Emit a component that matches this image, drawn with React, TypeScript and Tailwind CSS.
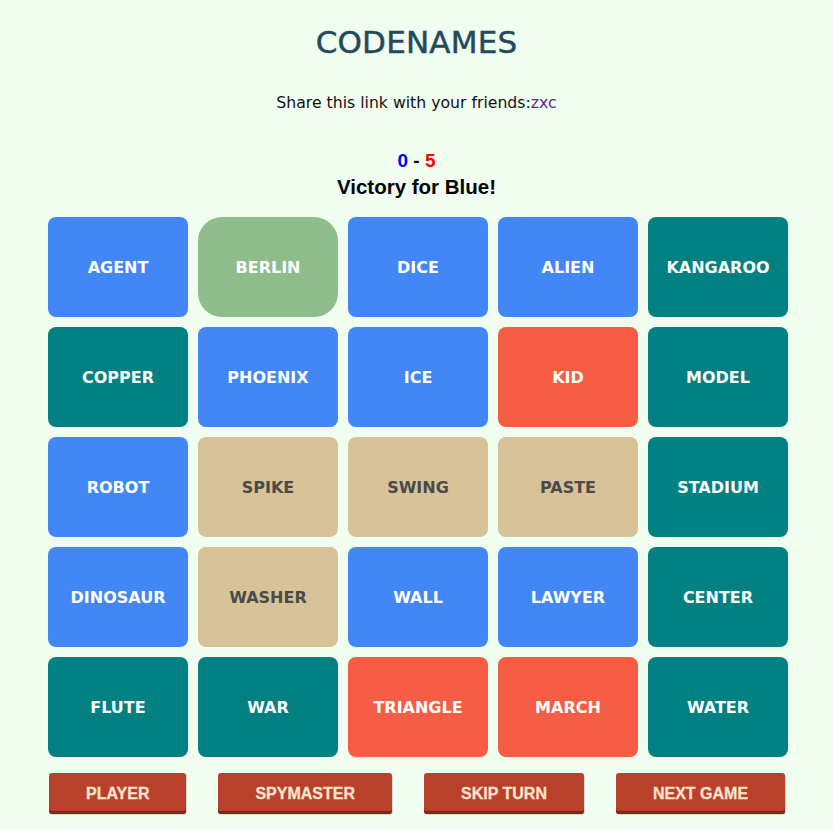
import React from "react";

type Card = { word: string; kind: "blue" | "red" | "teal" | "beige" | "green" };

const CARDS: Card[] = [
  { word: "AGENT", kind: "blue" },
  { word: "BERLIN", kind: "green" },
  { word: "DICE", kind: "blue" },
  { word: "ALIEN", kind: "blue" },
  { word: "KANGAROO", kind: "teal" },
  { word: "COPPER", kind: "teal" },
  { word: "PHOENIX", kind: "blue" },
  { word: "ICE", kind: "blue" },
  { word: "KID", kind: "red" },
  { word: "MODEL", kind: "teal" },
  { word: "ROBOT", kind: "blue" },
  { word: "SPIKE", kind: "beige" },
  { word: "SWING", kind: "beige" },
  { word: "PASTE", kind: "beige" },
  { word: "STADIUM", kind: "teal" },
  { word: "DINOSAUR", kind: "blue" },
  { word: "WASHER", kind: "beige" },
  { word: "WALL", kind: "blue" },
  { word: "LAWYER", kind: "blue" },
  { word: "CENTER", kind: "teal" },
  { word: "FLUTE", kind: "teal" },
  { word: "WAR", kind: "teal" },
  { word: "TRIANGLE", kind: "red" },
  { word: "MARCH", kind: "red" },
  { word: "WATER", kind: "teal" },
];

const KIND_CLASS: Record<Card["kind"], string> = {
  blue: "bg-[#4287f5] text-white rounded-lg",
  red: "bg-[#f55e45] text-white rounded-lg",
  teal: "bg-[#008080] text-white rounded-lg",
  beige: "bg-[#d7c397] text-[#4a4a4a] rounded-lg",
  green: "bg-[#8fbc8b] text-white rounded-[24px]",
};

const BUTTONS = ["PLAYER", "SPYMASTER", "SKIP TURN", "NEXT GAME"];

export default function App() {
  return (
    <div className="min-h-[829px] bg-[#f0fff0] font-['DejaVu_Sans',sans-serif]">
      {/* Header */}
      <div className="flex flex-col items-center pt-[24px]">
        <h1 className="text-[31px] leading-[36px] text-[#234a5c] tracking-[0.2px] [-webkit-text-stroke:0.5px_#234a5c]">
          CODENAMES
        </h1>
        <p className="mt-[34px] text-[15.7px] leading-[18px] text-[#111]">
          Share this link with your friends:<span className="text-[#5b2a86]">zxc</span>
        </p>
        <div className="mt-[38px] font-['Liberation_Sans',Arial,sans-serif] font-bold text-[19px] leading-[22px]">
          <span className="text-[#0000ff]">0</span>
          <span className="text-black"> - </span>
          <span className="text-[#ff0000]">5</span>
        </div>
        <div className="mt-[4px] font-['Liberation_Sans',Arial,sans-serif] font-bold text-[20.5px] leading-[22px] text-black">
          Victory for Blue!
        </div>
      </div>

      {/* Board */}
      <div className="mt-[19px] ml-[48px] grid grid-cols-[repeat(5,140px)] gap-[10px]">
        {CARDS.map((c) => (
          <div
            key={c.word}
            className={`h-[100px] pt-[1px] flex items-center justify-center font-bold text-[16px] ${KIND_CLASS[c.kind]}`}
          >
            {c.word}
          </div>
        ))}
      </div>

      {/* Controls */}
      <div className="mt-[16px] ml-[49px] flex gap-[32px] font-['Liberation_Sans',Arial,sans-serif]">
        {BUTTONS.map((b) => (
          <button
            key={b}
            className="h-[41px] px-[37px] pt-[1px] rounded-[3px] bg-[#b9402b] text-[#fde3cc] font-bold text-[16px] [-webkit-text-stroke:0.3px_#fde3cc] shadow-[inset_0_-3px_0_#7a2a1c,1px_1px_1px_rgba(0,0,0,0.15)]"
          >
            {b}
          </button>
        ))}
      </div>
    </div>
  );
}
